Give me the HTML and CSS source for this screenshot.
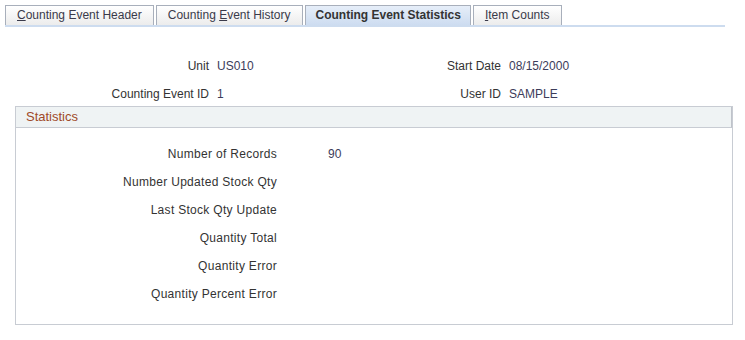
FILE: index.html
```html
<!DOCTYPE html>
<html lang="en">

<head>
    <meta charset="UTF-8">
    <title>Counting Event Statistics</title>
    <link rel="stylesheet" href="styles.css">
</head>

<body>
    <div class="tabs">
        <div class="tab"><u>C</u>ounting Event Header</div>
        <div class="tab">Counting <u>E</u>vent History</div>
        <div class="tab active">Counting Event Statistics</div>
        <div class="tab"><u>I</u>tem Counts</div>
    </div>

    <!-- key fields -->
    <div class="keys">
        <span class="label">Unit</span>
        <span class="value">US010</span>
        <span class="label">Start Date</span>
        <span class="value">08/15/2000</span>

        <span class="label">Counting Event ID</span>
        <span class="value">1</span>
        <span class="label">User ID</span>
        <span class="value">SAMPLE</span>
    </div>

    <div class="groupbox">
        <div class="groupbox-title">Statistics</div>
        <div class="stats">
            <span class="label">Number of Records</span>
            <span class="value num">90</span>
            <span class="label">Number Updated Stock Qty</span>
            <span class="value num"></span>
            <span class="label">Last Stock Qty Update</span>
            <span class="value num"></span>
            <span class="label">Quantity Total</span>
            <span class="value num"></span>
            <span class="label">Quantity Error</span>
            <span class="value num"></span>
            <span class="label">Quantity Percent Error</span>
            <span class="value num"></span>
        </div>
    </div>
</body>

</html>
```

FILE: styles.css
```css
body {
    margin: 0;
    background-color: #ffffff;
    color: #333;
    font-family: Arial, "Liberation Sans", sans-serif;
    font-size: 12px;
}

.tabs {
    display: flex;
    gap: 2px;
    width: 720px;
    margin: 5px 0 0 5px;
    border-bottom: 2px solid #cddcef;
}

.tab {
    height: 19px;
    line-height: 19px;
    padding: 0 11px;
    border: 1px solid #a8afbb;
    border-bottom: none;
    background: linear-gradient(#ffffff, #ececec);
    color: #3a3a4a;
    white-space: nowrap;
}

.tab u {
    text-decoration: underline;
}

.tab.active {
    padding: 0 9px 0 10px;
    background: linear-gradient(#e6eef9, #cddcf0);
    font-weight: bold;
    color: #333;
}

.keys {
    display: grid;
    grid-template-columns: 209px 200px 92px 1fr;
    row-gap: 14px;
    padding: 32px 0 5px 0;
    line-height: 14px;
}

.label {
    text-align: right;
    color: #333;
}

.value {
    padding-left: 8px;
    color: #3c3c5a;
}

.groupbox {
    width: 718px;
    margin-left: 15px;
    box-sizing: border-box;
    border: 1px solid #c8ccd3;
}

.groupbox-title {
    height: 20px;
    line-height: 20px;
    padding-left: 10px;
    background-color: #eff3f4;
    border-bottom: 1px solid #c8ccd3;
    border-right: 1px solid #bfc3ca;
    color: #a04a28;
    font-size: 13px;
}

.stats {
    display: grid;
    grid-template-columns: 261px 1fr;
    row-gap: 14px;
    padding: 19px 0 23px 0;
    line-height: 14px;
}

.stats .label {
    letter-spacing: 0.3px;
}

.value.num {
    padding-left: 51px;
}
```
